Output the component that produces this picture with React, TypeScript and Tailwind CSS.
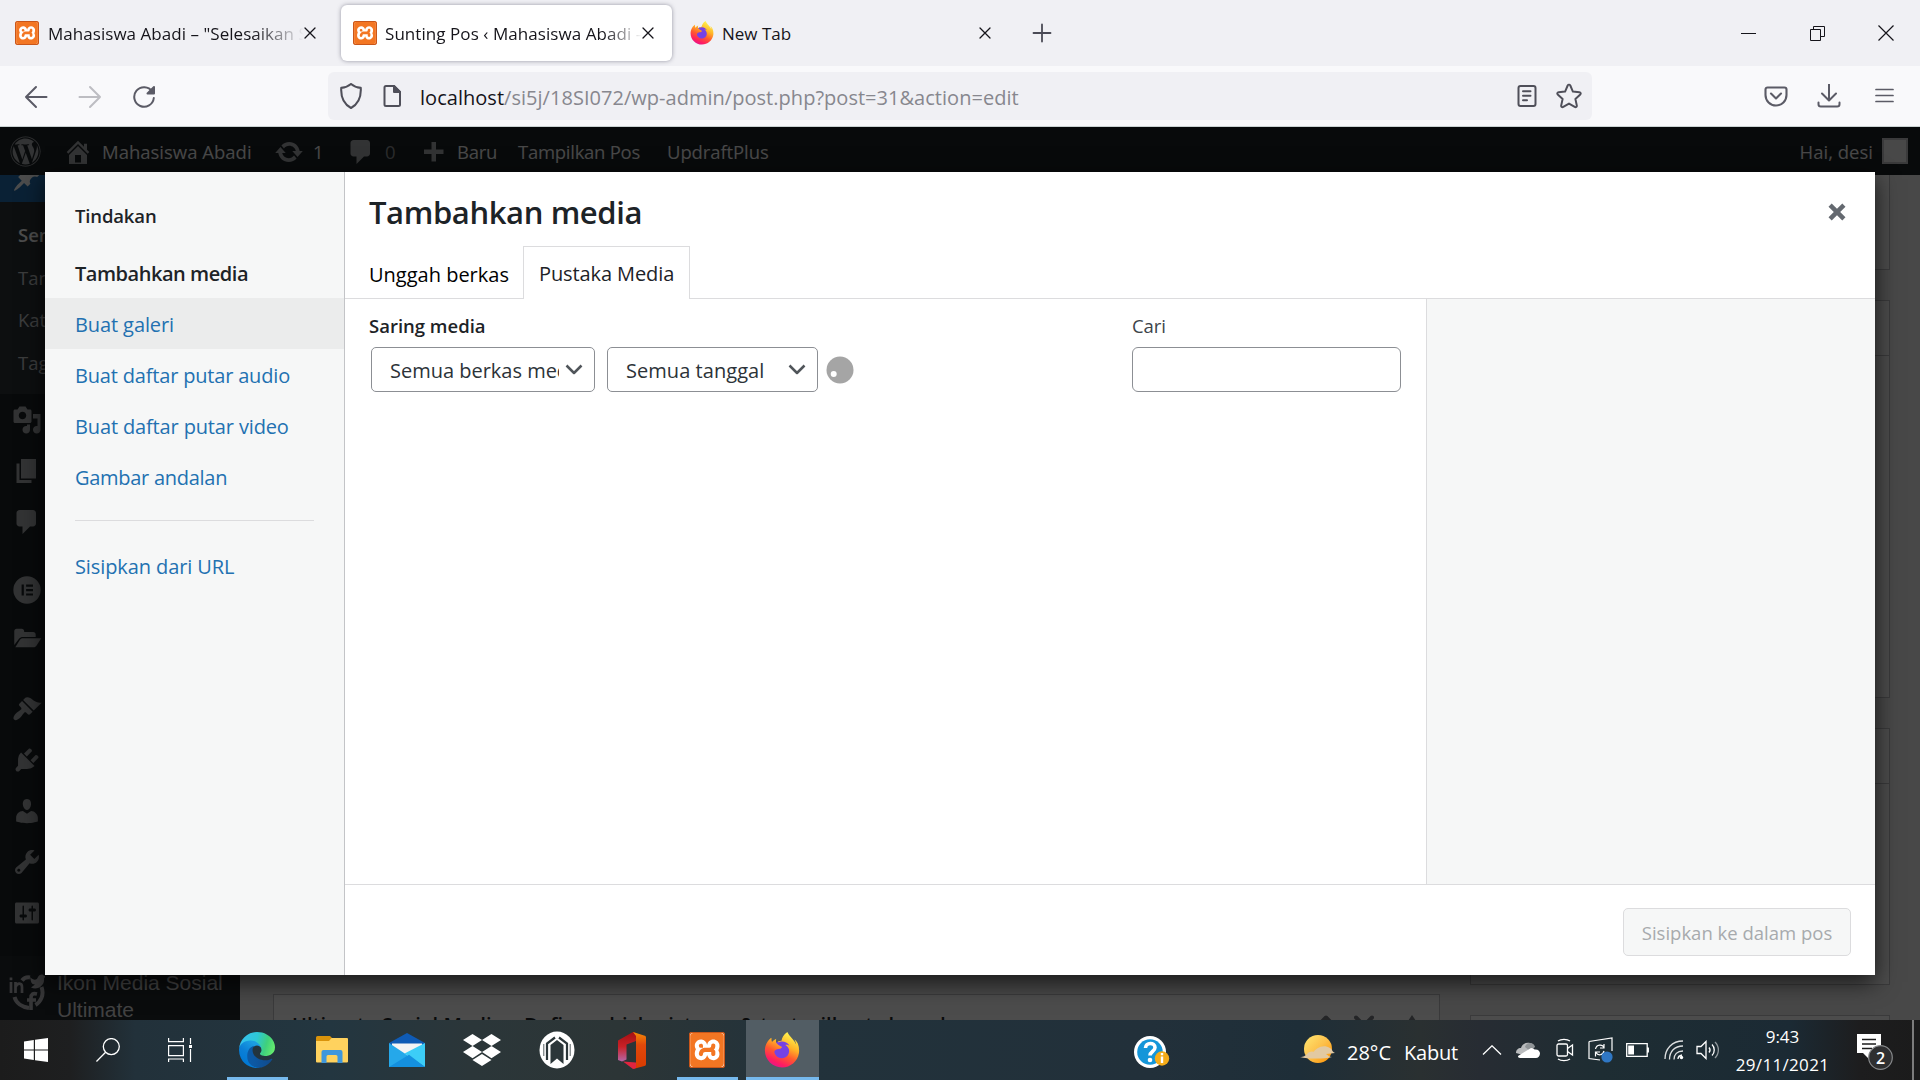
import type { ReactNode } from "react";
import { FaDropbox, FaFirefoxBrowser, FaWordpress } from "react-icons/fa";
import { SiXampp } from "react-icons/si";

const dash = {
  home: "M16 8.5l1.53 1.53-1.06 1.06L10 4.6l-6.47 6.49-1.06-1.06L10 2.5l4 4v-2h2v4zm-6-2.46l6 5.99V18H4v-5.97zM12 17v-5H8v5h4z",
  update:
    "M10.2 3.28c3.53 0 6.43 2.61 6.92 6h2.08l-3.5 4-3.5-4h2.32c-.45-1.97-2.21-3.45-4.32-3.45-1.45 0-2.73.71-3.54 1.78L4.95 5.66C6.23 4.2 8.11 3.28 10.2 3.28zm-.4 13.44c-3.52 0-6.43-2.61-6.92-6H.8l3.5-4c1.17 1.33 2.33 2.67 3.5 4H5.48c.45 1.97 2.21 3.45 4.32 3.45 1.45 0 2.73-.71 3.54-1.78l1.71 1.95c-1.28 1.46-3.15 2.38-5.25 2.38z",
  comments: "M5 2h9c1.1 0 2 .9 2 2v7c0 1.1-.9 2-2 2h-2l-5 5v-5H5c-1.1 0-2-.9-2-2V4c0-1.1.9-2 2-2z",
  plus: "M17 7v3h-5v5H9v-5H4V7h5V2h3v5h5z",
  pin: "M10.44 3.02l1.82-1.82 6.36 6.35-1.83 1.82c-1.05-.68-2.48-.57-3.41.36l-.75.75c-.92.93-1.04 2.35-.35 3.41l-1.83 1.82-2.41-2.41-2.8 2.79c-.42.42-3.38 2.71-3.8 2.29s1.86-3.39 2.28-3.81l2.79-2.79L4.1 9.36l1.83-1.82c1.05.69 2.48.57 3.4-.36l.75-.75c.93-.92 1.05-2.35.36-3.41z",
  media:
    "M13 11V4c0-.55-.45-1-1-1h-1.67L9 1H5L3.67 3H2c-.55 0-1 .45-1 1v7c0 .55.45 1 1 1h10c.55 0 1-.45 1-1zM7 4.5c1.38 0 2.5 1.12 2.5 2.5S8.38 9.5 7 9.5 4.5 8.38 4.5 7 5.62 4.5 7 4.5zM14 6h5v10.5c0 1.38-1.12 2.5-2.5 2.5S14 17.88 14 16.5s1.12-2.5 2.5-2.5c.17 0 .34.02.5.05V9h-3V6zm-4 8.05V13h2v3.5c0 1.38-1.12 2.5-2.5 2.5S7 17.88 7 16.5 8.12 14 9.5 14c.17 0 .34.02.5.05z",
  page: "M6 15V2h10v13H6zm-1 1h8v2H3V5h2v11z",
  appearance:
    "M14.48 11.06L7.41 3.99l1.5-1.5c.5-.56 2.3-.47 3.51.32 1.21.8 1.43 1.28 2.91 2.1 1.18.64 2.45 1.26 4.45.85zm-.71.71L6.7 4.7 4.93 6.47c-.39.39-.39 1.02 0 1.41l1.06 1.06c.39.39.39 1.03 0 1.42-.6.6-1.43 1.11-2.21 1.69-.35.26-.7.53-1.01.84C1.43 14.23.4 16.08 1.4 17.07c.99 1 2.84-.03 4.18-1.36.31-.31.58-.66.85-1.02.57-.78 1.08-1.61 1.69-2.21.39-.39 1.02-.39 1.41 0l1.06 1.06c.39.39 1.02.39 1.41 0z",
  plugins:
    "M13.11 4.36L9.87 7.6 8 5.73l3.24-3.24c.35-.34 1.05-.2 1.56.32.52.51.66 1.21.31 1.55zm-8 1.77l.91-1.12 9.01 9.01-1.19.84c-.71.71-2.63 1.16-3.82 1.16H6.14L4.9 17.26c-.59.59-1.54.59-2.12 0-.59-.58-.59-1.53 0-2.12l1.24-1.24v-3.88c0-1.13.4-3.19 1.09-3.89zm7.26 3.97l3.24-3.24c.34-.35 1.04-.21 1.55.31.52.51.66 1.21.31 1.55l-3.24 3.25z",
  users:
    "M10 9.25c-2.27 0-2.73-3.44-2.73-3.44C7 4.02 7.82 2 9.97 2c2.16 0 2.98 2.02 2.71 3.81 0 0-.41 3.44-2.68 3.44zm0 2.57L12.72 10c2.39 0 4.52 2.33 4.52 4.53v2.49s-3.65 1.13-7.24 1.13c-3.65 0-7.24-1.13-7.24-1.13v-2.49c0-2.25 1.94-4.48 4.47-4.48z",
  tools:
    "M16.68 9.77c-1.34 1.34-3.3 1.67-4.95.99l-5.41 6.52c-.99.99-2.59.99-3.58 0s-.99-2.59 0-3.57l6.52-5.42c-.68-1.65-.35-3.61.99-4.95 1.28-1.28 3.12-1.62 4.72-1.06l-2.89 2.89 2.82 2.82 2.86-2.87c.53 1.58.18 3.39-1.08 4.65zM3.81 16.21c.4.39 1.04.39 1.43 0 .4-.4.4-1.04 0-1.43-.39-.4-1.03-.4-1.43 0-.39.39-.39 1.03 0 1.43z",
  settings:
    "M18 16V4c0-.55-.45-1-1-1H3c-.55 0-1 .45-1 1v12c0 .55.45 1 1 1h14c.55 0 1-.45 1-1zM8 11h1c.55 0 1 .45 1 1s-.45 1-1 1H8v1.5c0 .28-.22.5-.5.5s-.5-.22-.5-.5V13H6c-.55 0-1-.45-1-1s.45-1 1-1h1V5.5c0-.28.22-.5.5-.5s.5.22.5.5V11zm5-2h-1c-.55 0-1-.45-1-1s.45-1 1-1h1V5.5c0-.28.22-.5.5-.5s.5.22.5.5V7h1c.55 0 1 .45 1 1s-.45 1-1 1h-1v5.5c0 .28-.22.5-.5.5s-.5-.22-.5-.5V9z",
  folder:
    "M1.5 3.4c0-.9.7-1.6 1.6-1.6h3.4c.9 0 1.6.7 1.6 1.6V4h6.1c.9 0 1.6.7 1.6 1.6v1.7H7.2c-1 0-1.8.4-2.4 1.1l-3.3 4.3zM7.3 8.2h12.2l-3 4.6c-.6.9-1.2 1.4-2.2 1.4H2.2l3-4.9c.5-.8 1.1-1.1 2.1-1.1z",
  elementor: "M10 .9a9.1 9.1 0 1 0 0 18.2A9.1 9.1 0 0 0 10 .9zM6.4 6.4h1.5v7.3H6.4zm3 0H14v1.4H9.4zm0 2.95H14v1.4H9.4zm0 2.95H14v1.4H9.4z",
  close: "M12.12 10l3.53 3.53-2.12 2.12L10 12.12l-3.54 3.54-2.12-2.12L7.88 10 4.34 6.46l2.12-2.12L10 7.88l3.54-3.53 2.12 2.12z",
};

function Dash({ name, className = "size-[30px] text-[#a7aaad]" }: { name: keyof typeof dash; className?: string }) {
  return (
    <svg viewBox="0 0 20 20" className={`shrink-0 ${className}`} fill="currentColor" fillRule="evenodd">
      <path d={dash[name]} />
    </svg>
  );
}

function Stroke({ children, className = "", box = 24, width = 2 }: { children: ReactNode; className?: string; box?: number; width?: number }) {
  return (
    <svg
      viewBox={`0 0 ${box} ${box}`}
      className={`shrink-0 ${className}`}
      fill="none"
      stroke="currentColor"
      strokeWidth={width}
      strokeLinecap="round"
      strokeLinejoin="round"
    >
      {children}
    </svg>
  );
}

function Firefox({ id, className }: { id: string; className: string }) {
  return (
    <svg viewBox="0 0 512 512" className={`shrink-0 ${className}`}>
      <defs>
        <linearGradient id={id} x1="0.75" y1="0.05" x2="0.3" y2="1">
          <stop offset="0" stopColor="#fff44f" />
          <stop offset="0.35" stopColor="#ffb126" />
          <stop offset="0.6" stopColor="#ff5a2e" />
          <stop offset="0.85" stopColor="#ff1c62" />
          <stop offset="1" stopColor="#e2168f" />
        </linearGradient>
      </defs>
      <circle cx="262" cy="270" r="150" fill="#7542e5" />
      <FaFirefoxBrowser size={512} fill={`url(#${id})`} />
    </svg>
  );
}

function Xampp({ className }: { className: string }) {
  return (
    <span className={`flex shrink-0 items-center justify-center rounded-[3px] bg-[#f07020] p-px ring-1 ring-inset ring-[#c9561a] ${className}`}>
      <span className="block size-full rounded-[3px] bg-white">
        <SiXampp className="size-full text-[#f37623]" />
      </span>
    </span>
  );
}

function TabClose() {
  return (
    <Stroke className="size-3 text-[#15141a]" box={12} width={1.3}>
      <path d="M1 1l10 10M11 1L1 11" />
    </Stroke>
  );
}

function TabStrip() {
  return (
    <div className="flex h-[66px] shrink-0 bg-[#f0f0f4] text-[17px] text-[#15141a]">
      <div className="flex w-[341px] items-center pl-[15px]">
        <Xampp className="size-6" />
        <span className="ml-[9px] w-[256px] overflow-hidden whitespace-nowrap pt-px tracking-[0.04px] [mask-image:linear-gradient(to_right,#000_80%,transparent_100%)]">
          Mahasiswa Abadi – "Selesaikan S
        </span>
        <TabClose />
      </div>
      <div className="mt-[5px] flex h-14 w-[331px] items-center rounded-md bg-white pl-3 shadow-[0_0_4px_rgba(90,90,110,0.6)]">
        <Xampp className="size-6" />
        <span className="ml-2 w-[257px] overflow-hidden whitespace-nowrap pt-px tracking-[0.06px] [mask-image:linear-gradient(to_right,#000_85%,transparent_100%)]">
          Sunting Pos ‹ Mahasiswa Abadi —
        </span>
        <TabClose />
      </div>
      <div className="flex w-[345px] items-center pl-[18px]">
        <Firefox id="fx-tab" className="size-6" />
        <span className="ml-2 w-[257px] pt-px">New Tab</span>
        <TabClose />
      </div>
      <div className="flex items-center pl-[15px]">
        <Stroke className="size-5 text-[#4a4a55]" box={20} width={1.8}>
          <path d="M10 1.5v17M1.5 10h17" />
        </Stroke>
      </div>
      <div className="ml-auto flex items-center text-[#15141a]">
        <div className="flex w-[69px] justify-center">
          <div className="h-px w-[15px] bg-[#15141a]" />
        </div>
        <div className="flex w-[69px] justify-center">
          <svg viewBox="0 0 15 15" className="size-[15px]" fill="none" stroke="currentColor">
            <path d="M.5 3.5h10v11H.5zM3.5 3.5v-3h11v10h-4" />
          </svg>
        </div>
        <div className="flex w-[68px] justify-center">
          <svg viewBox="0 0 16 16" className="size-4" stroke="currentColor" strokeWidth="1.2">
            <path d="M.5.5l15 15M15.5.5l-15 15" />
          </svg>
        </div>
      </div>
    </div>
  );
}

function NavBar() {
  return (
    <div className="flex h-[61px] shrink-0 items-center border-b border-[#cbd3d3] bg-[#f9f9fb] text-[#5b5b66]">
      <div className="flex w-[328px] items-center gap-[30px] pl-6 pt-px">
        <Stroke className="size-6">
          <path d="M22.5 12H2M12 2L2 12l10 10" />
        </Stroke>
        <Stroke className="size-6 text-[#bdbdc2]">
          <path d="M1.5 12H22M12 2l10 10-10 10" />
        </Stroke>
        <Stroke className="size-6">
          <path d="M20.2 6.5A9.8 9.8 0 1 0 21.8 13" />
          <path d="M22 2v6.5h-6.5z" fill="currentColor" />
        </Stroke>
      </div>
      <div className="flex h-12 w-[1264px] items-center rounded-md bg-[#f0f0f4] px-[10px]">
        <Stroke className="size-[26px] text-[#4f4f59]" width={1.9}>
          <path d="M12 .9c2.500 2.200 5.500 3.300 9 3.600.5 8-2.300 15-9 18.600C5.300 19.500 2.500 12.500 3 4.500c3.500-.3 6.500-1.400 9-3.600z" />
        </Stroke>
        <Stroke className="ml-4 size-6 text-[#4f4f59]">
          <path d="M6 2h8l6 6v12.500a1.500 1.500 0 0 1-1.500 1.500H6a1.500 1.500 0 0 1-1.500-1.500v-17A1.500 1.500 0 0 1 6 2z" />
          <path d="M14 2v6h6z" fill="currentColor" />
        </Stroke>
        <div className="ml-4 whitespace-nowrap pt-[3px] text-[20px] tracking-[0.03px] text-[#87878e]">
          <span className="text-[#15141a]">localhost</span>/si5j/18SI072/wp-admin/post.php?post=31&amp;action=edit
        </div>
        <Stroke className="ml-auto size-6 text-[#4f4f59]">
          <rect x="3.5" y="2" width="17" height="20" rx="2" />
          <path d="M8 7.200h7.500M8 11.700h7.500M8 16.200h4" />
        </Stroke>
        <Stroke className="ml-[17px] size-[26px] text-[#4f4f59]" width={1.8}>
          <path d="M12 1.500c.6 0 1 .3 1.200.8l2.400 5.600 6 .6c1.200.1 1.600 1.300.8 2.100l-4.500 4.200 1.300 6c.2 1.100-.9 1.900-1.900 1.300L12 19l-5.300 3.100c-1 .6-2.100-.2-1.900-1.300l1.300-6-4.500-4.200c-.8-.8-.4-2 .8-2.100l6-.6 2.400-5.600c.2-.5.6-.8 1.200-.8z" />
        </Stroke>
      </div>
      <div className="ml-auto flex items-center pr-[26px]">
        <Stroke className="size-6" width={2.1}>
          <path d="M3.500 3.500h17a2 2 0 0 1 2 2V11a10.500 10.500 0 0 1-21 0V5.500a2 2 0 0 1 2-2z" />
          <path d="M7 9.500l5 5 5-5" />
        </Stroke>
        <Stroke className="ml-[29px] size-6">
          <path d="M12 0v16M5 9.500l7 7 7-7M1.500 18.500v1.700a2.300 2.300 0 0 0 2.300 2.300h16.400a2.300 2.300 0 0 0 2.300-2.300v-1.700" />
        </Stroke>
        <Stroke className="ml-[34px] size-[19px] -translate-y-px" box={19} width={1.7}>
          <path d="M1 3.500h17M1 9.500h17M1 15.500h17" />
        </Stroke>
      </div>
    </div>
  );
}

function AdminBar() {
  return (
    <div className="flex h-12 shrink-0 items-center bg-[#1d2327] pt-px text-[18.5px] text-[#f0f0f1]">
      <div className="w-[63px] pl-[10px]">
        <FaWordpress className="size-[31px] text-[#a7aaad]" />
      </div>
      <div className="flex w-[211px] items-center gap-[9px]">
        <Dash name="home" />
        Mahasiswa Abadi
      </div>
      <div className="flex w-[72px] items-center gap-[9px]">
        <Dash name="update" />1
      </div>
      <div className="flex w-[72px] items-center gap-[9px]">
        <Dash name="comments" />
        <span className="text-[#8f9294]">0</span>
      </div>
      <div className="flex w-[100px] items-center gap-[9px] tracking-[-0.29px]">
        <Dash name="plus" className="size-[30px] translate-y-[2px] text-[#a7aaad]" />
        Baru
      </div>
      <div className="w-[149px] tracking-[-0.27px]">Tampilkan Pos</div>
      <div className="tracking-[-0.1px]">UpdraftPlus</div>
      <div className="ml-auto">Hai, desi</div>
      <div className="ml-[9px] mr-3 size-[26px] -translate-y-px border-2 border-[#c3c4c7] bg-[#f0f0f1]" />
    </div>
  );
}

function SideRow({ name }: { name: keyof typeof dash }) {
  return (
    <li className="flex h-[51px] items-center pl-3">
      <Dash name={name} />
    </li>
  );
}

function AdminMenu() {
  return (
    <ul className="w-60 shrink-0 bg-[#1d2327] text-[#f0f0f1]">
      <li className="flex h-[27px] items-end overflow-hidden bg-[#2271b1] pb-[9px] pl-3">
        <Dash name="pin" className="size-[30px] text-white" />
      </li>
      <li className="h-[192px] bg-[#2c3338] pl-[18px] pt-3 text-[18.5px] leading-[42.5px] text-[#c5c8ca]">
        <div className="font-semibold text-white">Sem</div>
        <div>Tam</div>
        <div>Kat</div>
        <div>Tag</div>
      </li>
      <SideRow name="media" />
      <SideRow name="page" />
      <SideRow name="comments" />
      <li className="h-[17px]" />
      <SideRow name="elementor" />
      <SideRow name="folder" />
      <li className="h-[17px]" />
      <SideRow name="appearance" />
      <SideRow name="plugins" />
      <SideRow name="users" />
      <SideRow name="tools" />
      <SideRow name="settings" />
      <li className="h-[18px]" />
      <li className="flex h-[70px] items-start bg-[#22282d] pl-[9px] font-['Liberation_Sans',Arial,sans-serif] text-[21px] leading-[27px] text-[#dcdcde]">
        <svg viewBox="0 0 36 40" className="mt-4 h-10 w-9 shrink-0 text-[#b4b6b9]" fill="none" stroke="currentColor">
          <path d="M13 8.500C15 6 18 5 21 5.500M32.500 15c3 8-1 15-6 18M20 36C13 35 7 31 5.500 25" strokeWidth="4" />
          <path d="M2 10v11M6.500 10v11M6.500 15c2-5 6.500-4 6.500 0v6" strokeWidth="2.700" />
          <path d="M2 5.500v2.700" strokeWidth="2.700" />
          <path d="M21 5c4 4 7 3 8 0 2-3 5-3 6-1l2-.5-2 3c1 7-6 12-13 9l4-3c-4 0-4-3-5-7.500z" fill="currentColor" stroke="none" />
          <path d="M28 22c-4-1-6 0-6 4v12M18 28h9" strokeWidth="3.600" />
        </svg>
        <span className="ml-3 mt-[13px]">
          Ikon Media Sosial
          <br />
          Ultimate
        </span>
      </li>
    </ul>
  );
}

function EditorPage() {
  return (
    <div className="flex min-h-0 flex-1 overflow-hidden bg-[#f0f0f1]">
      <AdminMenu />
      <div className="ml-[33px] mt-[819px] h-40 w-[1167px] shrink-0 border border-[#c3c4c7] bg-white">
        <div className="flex h-[60px] items-center pl-[18px] pr-[17px] text-[20px] font-semibold text-[#1d2327]">
          <span className="whitespace-nowrap tracking-[0.07px]">Ultimate Social Media – Define which pictures &amp; text will get shared</span>
          <Stroke className="ml-auto size-5 text-[#787c82]" box={20} width={4}>
            <path d="M3 9.500l7-7 7 7" />
          </Stroke>
          <Stroke className="ml-[18px] size-5 text-[#787c82]" box={20} width={4}>
            <path d="M2 2.500l8 8 8-8" />
          </Stroke>
          <svg viewBox="0 0 20 20" className="ml-[28px] size-5" fill="#787c82">
            <path d="M10 0l8 12H2z" />
          </svg>
        </div>
      </div>
      <div className="ml-[30px] w-[420px] shrink-0 *:border *:border-[#c3c4c7] *:bg-white">
        <div className="h-[95px] !border-t-0" />
        <div className="mt-[30px] h-[398px]">
          <div className="h-[55px] border-b border-[#c3c4c7]" />
        </div>
        <div className="mt-[30px] h-[257px]">
          <div className="h-[55px] border-b border-[#c3c4c7]" />
        </div>
        <div className="mt-[30px] h-40" />
      </div>
    </div>
  );
}

function SelectBox({ label, className, textClass }: { label: string; className: string; textClass: string }) {
  return (
    <div className={`flex h-[45px] items-center justify-between rounded-[5px] border border-[#8c8f94] bg-white pl-[18px] pr-[11px] text-[20px] text-[#2c3338] ${className}`}>
      <span className={`overflow-hidden whitespace-nowrap pt-[3px] ${textClass}`}>{label}</span>
      <Stroke className="size-[18px] text-[#50555a]" box={18} width={2.5}>
        <path d="M1.500 4.500L9 12l7.500-7.500" strokeLinecap="butt" />
      </Stroke>
    </div>
  );
}

function MediaModal() {
  return (
    <div className="absolute left-[45px] top-[45px] flex h-[803px] w-[1830px] bg-white text-[#1d2327] shadow-[0_7px_22px_rgba(0,0,0,0.7)]">
      <nav className="flex w-[300px] shrink-0 flex-col border-r border-[#c3c4c7] bg-[#f6f7f7] text-[20px] leading-[54px] text-[#2271b1]">
        <h2 className="mt-[17px] h-[58px] pl-[30px] text-[18.5px] font-semibold leading-[54px] tracking-[-0.15px] text-[#1d2327]">Tindakan</h2>
        <div className="h-[51px] pl-[30px] font-semibold tracking-[-0.46px] text-[#1d2327]">Tambahkan media</div>
        <div className="h-[51px] bg-[#ebecec] pl-[30px] tracking-[-0.1px]">Buat galeri</div>
        <div className="h-[51px] pl-[30px] tracking-[-0.18px]">Buat daftar putar audio</div>
        <div className="h-[51px] pl-[30px] tracking-[-0.14px]">Buat daftar putar video</div>
        <div className="h-[51px] pl-[30px] tracking-[-0.28px]">Gambar andalan</div>
        <div className="mx-[30px] mb-[20px] mt-[18px] h-px bg-[#dcdcde]" />
        <div className="h-[51px] pl-[30px] leading-[51px] tracking-[-0.1px]">Sisipkan dari URL</div>
      </nav>
      <div className="flex min-w-0 flex-1 flex-col">
        <header className="flex h-[127px] shrink-0 flex-col justify-between border-b border-[#dcdcde]">
          <div className="flex h-[72px] items-center justify-between pl-6 pr-[23px] pt-[9px]">
            <h1 className="text-[31px] font-semibold tracking-[-0.39px]">Tambahkan media</h1>
            <Dash name="close" className="size-[30px] -translate-y-px text-[#646970]" />
          </div>
          <div className="-mb-px flex h-[53px] shrink-0 pl-6 text-[20px]">
            <div className="w-[154px] leading-[57px] text-black">Unggah berkas</div>
            <div className="h-[53px] w-[167px] border border-b-0 border-[#dcdcde] bg-white pl-[15px] leading-[54px] tracking-[-0.1px]">Pustaka Media</div>
          </div>
        </header>
        <div className="flex min-h-0 flex-1">
          <div className="flex flex-1 justify-between border-r border-[#dcdcde] pl-6 pr-[25px] pt-[9px]">
            <div>
              <div className="h-[39px] text-[18.5px] font-semibold leading-[35px]">Saring media</div>
              <div className="flex items-center pl-[2px]">
                <SelectBox label="Semua berkas media" className="w-[224px]" textClass="w-[169px] tracking-[-0.01px]" />
                <SelectBox label="Semua tanggal" className="ml-3 w-[211px]" textClass="tracking-[0.05px]" />
                <svg viewBox="0 0 28 28" className="ml-2 size-7">
                  <circle cx="14" cy="14" r="13.5" fill="#a5a5a5" />
                  <circle cx="7.700" cy="18" r="3" fill="#fff" />
                </svg>
              </div>
            </div>
            <div className="w-[269px]">
              <div className="h-[39px] text-[18.5px] leading-[35px] tracking-[-0.1px] text-[#3c434a]">Cari</div>
              <div className="h-[45px] rounded-[6px] border border-[#8c8f94] bg-white" />
            </div>
          </div>
          <aside className="w-[448px] bg-[#f6f7f7]" />
        </div>
        <footer className="flex h-[91px] shrink-0 items-center justify-end border-t border-[#dcdcde] pb-px pr-6 pt-[5px]">
          <div className="flex h-12 w-[228px] items-center justify-center rounded-[5px] border border-[#dcdcde] bg-[#f6f7f7] pt-[2px] text-[18.5px] text-[#a7aaad]">
            Sisipkan ke dalam pos
          </div>
        </footer>
      </div>
    </div>
  );
}

function EdgeLogo() {
  return (
    <svg viewBox="0 0 256 256" className="size-9">
      <defs>
        <linearGradient id="edge-a" x1="0.2" y1="0.6" x2="1" y2="0.6">
          <stop offset="0" stopColor="#0c59a4" />
          <stop offset="1" stopColor="#114a8b" />
        </linearGradient>
        <linearGradient id="edge-b" x1="0.7" y1="0.2" x2="0.3" y2="0.9">
          <stop offset="0" stopColor="#1b9de2" />
          <stop offset="0.5" stopColor="#0b7fd6" />
          <stop offset="1" stopColor="#0078d4" />
        </linearGradient>
        <linearGradient id="edge-c" x1="0" y1="0.4" x2="1" y2="0.6">
          <stop offset="0" stopColor="#35c1f1" />
          <stop offset="0.45" stopColor="#2ec7d6" />
          <stop offset="0.75" stopColor="#3fd07c" />
          <stop offset="1" stopColor="#66eb6e" />
        </linearGradient>
      </defs>
      <path fill="url(#edge-b)" d="M105.700 241.400a79.200 79.200 0 0 1-22.700-21.300 80.700 80.700 0 0 1 29.500-120c3.200-1.500 8.500-4.100 15.600-4a32.400 32.400 0 0 1 25.700 13 31.900 31.900 0 0 1 6.300 18.700c0-.2 24.500-79.600-80-79.600-43.900 0-80 41.700-80 78.200a130.200 130.200 0 0 0 12.100 56 128 128 0 0 0 156.400 67 75.500 75.500 0 0 1-62.800-8z" />
      <path fill="url(#edge-a)" d="M231 190.500c-3.400 1.800-6.900 3.400-10.500 4.700a101.900 101.900 0 0 1-35.900 6.500c-47.300 0-88.500-32.500-88.500-74.300.1-11.400 6.400-21.900 16.400-27.300-42.800 1.800-53.800 46.400-53.800 72.500 0 73.900 68.100 81.400 82.800 81.400 7.900 0 19.800-2.300 27-4.600l1.300-.4a128.300 128.300 0 0 0 66.600-52.800 4 4 0 0 0-5.400-5.700z" />
      <path fill="url(#edge-c)" d="M152.300 148.900c-.9 1-3.400 2.500-3.400 5.600 0 2.600 1.700 5.200 4.800 7.300 14.300 10 41.400 8.600 41.500 8.600 10.700 0 21.100-2.900 30.300-8.300A61.400 61.400 0 0 0 256 109c.3-22.400-8-37.300-11.300-43.900C223.400 23.700 177.700 0 128 0A128 128 0 0 0 0 126.200c.5-36.500 36.800-66 80-66 3.500 0 23.500.3 42 10.100 16.300 8.600 24.900 18.900 30.800 29.200 6.200 10.700 7.300 24.100 7.300 29.500 0 5.300-2.700 13.300-7.800 19.900z" />
    </svg>
  );
}

function TaskCell({ children, running = false, active = false }: { children: ReactNode; running?: boolean; active?: boolean }) {
  return (
    <div className="flex h-full w-[75px] shrink-0 flex-col items-center">
      <div className={`flex w-[73px] flex-1 items-center justify-center ${active ? "bg-[#525d64]" : ""} ${running || active ? "pt-[3px]" : ""}`}>{children}</div>
      {running && <div className="h-[3px] w-[61px] bg-[#76b9ed]" />}
      {active && <div className="h-[3px] w-[73px] bg-[#76b9ed]" />}
    </div>
  );
}

function Tray({ className, children }: { className: string; children: ReactNode }) {
  return <div className={`flex shrink-0 items-center justify-center ${className}`}>{children}</div>;
}

function Taskbar() {
  return (
    <div className="flex h-[60px] shrink-0 items-center bg-[linear-gradient(to_right,#1c1c1c_0px,#1e1f20_70px,#22313a_135px,#233640_330px,#2b3639_470px,#2c3536_620px,#22323b_800px,#22303a_1150px,#1e2e38_1300px,#2a3031_1420px,#272c33_1480px,#1e2d33_1600px,#1b2a34_1790px,#1d1d1e_1860px,#1b1b1b_1920px)] text-white">
      <Tray className="w-[72px]">
        <svg viewBox="0 0 24 24" className="size-6" fill="currentColor">
          <path d="M0 3.400L9.800 2v9.500H0zM11 1.800L24 0v11.500H11zM0 12.500h9.800V22L0 20.600zM11 12.500h13V24l-13-1.800z" />
        </svg>
      </Tray>
      <Tray className="w-[72px]">
        <svg viewBox="0 0 24 24" className="size-6" fill="none" stroke="currentColor" strokeWidth="1.3">
          <circle cx="15.3" cy="8.6" r="8" />
          <path d="M9.600 14.300L.4 23.500" />
        </svg>
      </Tray>
      <Tray className="w-[75.5px]">
        <svg viewBox="0 0 24 24" className="size-6 -translate-x-[2px]" fill="none" stroke="currentColor" strokeWidth="1.2">
          <path d="M.6 0v3.600h14.800V0M.6 7.600h14.800v10H.6zM.6 24v-3h14.800v3M22.500 0v6M22.500 11v13" />
          <path d="M21 7h3v3h-3z" fill="currentColor" stroke="none" />
        </svg>
      </Tray>
      <TaskCell running>
        <EdgeLogo />
      </TaskCell>
      <TaskCell>
        <svg viewBox="0 0 32 28" className="h-7 w-8">
          <path d="M0 1.500A1.500 1.500 0 0 1 1.500 0H14l2 2-2 3H0z" fill="#d9930b" />
          <path d="M0 5h13l2.500-3H31a1 1 0 0 1 1 1v22.500a1 1 0 0 1-1 1H1a1 1 0 0 1-1-1z" fill="#ffd25e" />
          <path d="M5.500 27V16a2 2 0 0 1 2-2h17a2 2 0 0 1 2 2v11h-5v-6.500a1.500 1.500 0 0 0-1.500-1.500h-8a1.500 1.500 0 0 0-1.500 1.500V27z" fill="#3f97dc" />
        </svg>
      </TaskCell>
      <TaskCell>
        <svg viewBox="0 0 36 34" className="h-[34px] w-9">
          <path d="M0 10L18 0l18 10v4H0z" fill="#0f5bb5" />
          <path d="M3 10.500h30V20L18 27 3 20z" fill="#f4f4f4" />
          <path d="M0 10l18 12L36 34H0z" fill="#25a8ea" />
          <path d="M36 10v24L15.500 20.500z" fill="#3ccdf7" />
          <path d="M0 34l20-12.200L36 34z" fill="#1490df" />
        </svg>
      </TaskCell>
      <TaskCell>
        <FaDropbox className="size-[38px]" />
      </TaskCell>
      <TaskCell>
        <svg viewBox="0 0 36 38" className="h-[38px] w-9">
          <ellipse cx="18" cy="19" rx="17.5" ry="18.5" fill="#fff" />
          <path d="M11.500 33V14L18 9l6.500 5v19L18 27.500z" fill="#2b3639" />
          <path d="M8 29V12.500L16 6.500M28 29V12.500L20 6.500" fill="none" stroke="#2b3639" strokeWidth="2.2" />
          <path d="M4.800 13v12M31.200 13v12" fill="none" stroke="#2b3639" strokeWidth=".8" />
        </svg>
      </TaskCell>
      <TaskCell>
        <svg viewBox="0 0 28 37" className="h-[37px] w-7">
          <defs>
            <linearGradient id="office-l" x1="0" y1="0" x2="0" y2="1">
              <stop offset="0" stopColor="#a50f12" />
              <stop offset="0.5" stopColor="#c92127" />
              <stop offset="1" stopColor="#b567a8" />
            </linearGradient>
            <linearGradient id="office-r" x1="0" y1="0" x2="0" y2="1">
              <stop offset="0" stopColor="#f58a07" />
              <stop offset="0.35" stopColor="#e0480a" />
              <stop offset="1" stopColor="#d83b01" />
            </linearGradient>
          </defs>
          <path d="M0 8.500L15 0l3 1v8l-9.500 3.500v15L4 29.500 0 28z" fill="url(#office-l)" />
          <path d="M15 0l11 3.500a2 2 0 0 1 2 2V32a2 2 0 0 1-1.500 2L15 37l3-3.500V4z" fill="url(#office-r)" />
          <path d="M5 29.500L18 30.500V36l-3 1z" fill="#e0243f" />
        </svg>
      </TaskCell>
      <TaskCell running>
        <Xampp className="size-9" />
      </TaskCell>
      <TaskCell active>
        <Firefox id="fx-task" className="size-9" />
      </TaskCell>
      <Tray className="ml-auto w-[60px] pt-1">
        <svg viewBox="0 0 36 32" className="h-8 w-9">
          <circle cx="16" cy="16" r="16" fill="#fff" />
          <circle cx="16" cy="16" r="12.8" fill="#1496d9" />
          <path d="M11.500 12c0-6 9.500-6 9.500-.5 0 4-5 4-5 8" fill="none" stroke="#fff" strokeWidth="3.6" />
          <circle cx="16" cy="24" r="2.3" fill="#fff" />
          <circle cx="28" cy="22.5" r="7.2" fill="#f5ac19" />
          <path d="M28 20.500v6.500M28 17v2.200" stroke="#fff" strokeWidth="2.4" />
        </svg>
      </Tray>
      <Tray className="ml-[118px] w-9">
        <svg viewBox="0 0 36 30" className="h-[30px] w-9">
          <defs>
            <linearGradient id="sun" x1="0" y1="0" x2="1" y2="1">
              <stop offset="0" stopColor="#ffe873" />
              <stop offset="0.5" stopColor="#fdc04a" />
              <stop offset="1" stopColor="#ff9100" />
            </linearGradient>
          </defs>
          <circle cx="18" cy="14" r="14" fill="url(#sun)" />
          <path d="M13 18c3-5 10-9 17-5 3 2 2 4 5 5l-9 1c2 1 3 3 6 3-8 2-24 2-32 0 4 0 5-1 7-3 3-3 6-3 9-1z" fill="#e2c9a2" />
        </svg>
      </Tray>
      <div className="ml-[11px] w-[57px] pt-[5px] text-[20px]">28°C</div>
      <div className="w-[68px] pt-[5px] text-[20px] tracking-[-0.2px]">Kabut</div>
      <Tray className="w-[40px]">
        <svg viewBox="0 0 20 10" className="h-[10px] w-5" fill="none" stroke="currentColor" strokeWidth="1.3">
          <path d="M1 9.500L10 .8l9 8.700" />
        </svg>
      </Tray>
      <Tray className="w-[32px]">
        <svg viewBox="0 0 24 16" className="h-4 w-6">
          <path d="M0 11c0-3 2-5 5-5 1-4 5-6 9-5 2 .5 4 2 4.500 4L7 13z" fill="#b9bbbd" />
          <path d="M9 5C10-.5 18-.5 19 5L14 9z" fill="#8f9497" />
          <path d="M2 14l13-8c2 0 3 1 3.500 1.500C22 7 24 9 24 11.500S22 16 20 16H4c-1.500 0-2-1-2-2z" fill="#fff" />
        </svg>
      </Tray>
      <Tray className="w-[42px]">
        <svg viewBox="0 0 18 24" className="h-6 w-[18px]" fill="none" stroke="currentColor" strokeWidth="1.3">
          <path d="M2 3C5 .8 11 .8 14 3M2 21c3 2.200 9 2.200 12 0" />
          <rect x="1" y="6" width="10.5" height="12" rx="1.5" />
          <path d="M11.500 10.500l5-3.500v10l-5-3.500" />
        </svg>
      </Tray>
      <Tray className="w-[30px]">
        <svg viewBox="0 0 26 26" className="size-[26px]" fill="none" stroke="currentColor" strokeWidth="1.2">
          <path d="M1 4.500L24 1v13M12 23L1 21.500v-17" />
          <path d="M7.500 12c1-5 7-5 8.500-1.500M16 7v4h-4M16 14c-1 4.500-6 5-8 1.500M7.500 19.500V15H12" />
          <circle cx="19" cy="20" r="5.6" fill="#2f77c4" stroke="none" />
        </svg>
      </Tray>
      <Tray className="w-[42px]">
        <svg viewBox="0 0 23 14" className="h-[14px] w-[23px]" fill="none" stroke="currentColor" strokeWidth="1.3">
          <path d="M.7.7h20.500v12.600H.7zM22.300 4.500v5" />
          <path d="M2.200 2.500H8v9H2.200z" fill="currentColor" stroke="none" />
        </svg>
      </Tray>
      <Tray className="w-[32px]">
        <svg viewBox="0 0 20 20" className="size-5" fill="none" stroke="currentColor" strokeWidth="1.3">
          <path d="M1 19C1 9 8 1 19 1M5.500 19.500c0-8 5-13.500 13.500-13.500M10 19.500c0-5 3-8.500 9-8.500" opacity=".85" />
          <path d="M14 19c0-2 1.500-3.500 4-4" />
          <circle cx="17.5" cy="17.5" r="1.7" fill="currentColor" stroke="none" />
        </svg>
      </Tray>
      <Tray className="w-[36px]">
        <svg viewBox="0 0 24 20" className="h-5 w-6" fill="none" stroke="currentColor" strokeWidth="1.3">
          <path d="M1 6.500h4l5-5v17l-5-5H1z" />
          <path d="M13 7.500c1.300 1.500 1.300 3.500 0 5M16 4.500c3 3 3 8 0 11" />
          <path d="M19 2c4.500 4.500 4.500 11.500 0 16" opacity=".5" />
        </svg>
      </Tray>
      <div className="w-[113px] pt-[2px] text-center text-[17px] leading-[28px]">
        <div>9:43</div>
        <div className="tracking-[0.32px]">29/11/2021</div>
      </div>
      <Tray className="w-[73px]">
        <svg viewBox="0 0 37 38" className="mt-1 h-[38px] w-[37px]">
          <path d="M0 1h24v19H12v6l-6-6H0z" fill="#fff" />
          <path d="M5 6.500h14M5 11h14M5 15.500h10" stroke="#1c1c1c" strokeWidth="1.3" />
          <circle cx="23.5" cy="24.5" r="11.8" fill="#2f2f30" stroke="#87898b" strokeWidth="1.2" />
          <text x="23.5" y="30.5" textAnchor="middle" fill="#fff" fontSize="16" fontWeight="600">
            2
          </text>
        </svg>
      </Tray>
      <div className="h-full w-[8px] border-l-2 border-[#7c7c7c]" />
    </div>
  );
}

export default function App() {
  return (
    <div className="flex h-[1080px] w-[1920px] flex-col overflow-hidden font-['Open_Sans','Noto_Sans',sans-serif]">
      <TabStrip />
      <NavBar />
      <main className="relative flex min-h-0 flex-1 flex-col overflow-hidden">
        <AdminBar />
        <EditorPage />
        <div className="absolute inset-0 bg-black/70" />
        <MediaModal />
      </main>
      <Taskbar />
    </div>
  );
}
